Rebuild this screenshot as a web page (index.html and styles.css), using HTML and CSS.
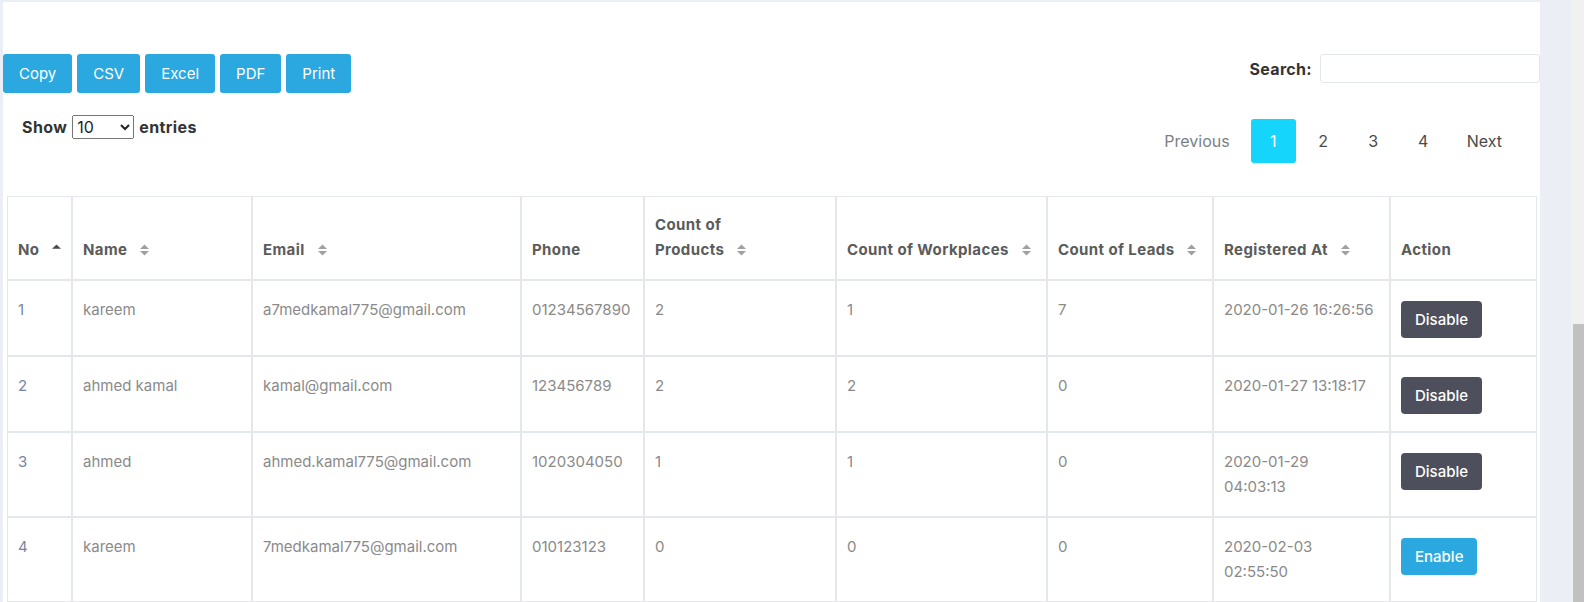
FILE: index.html
```html
<!DOCTYPE html>
<html lang="en">
<head>
<meta charset="utf-8">
<title>Users</title>
<link rel="stylesheet" href="styles.css">
</head>
<body>
<div class="app">
  <main class="content">
    <section class="card">
      <div class="toolbar">
        <div class="export-buttons">
          <button class="btn btn-export">Copy</button>
          <button class="btn btn-export">CSV</button>
          <button class="btn btn-export">Excel</button>
          <button class="btn btn-export">PDF</button>
          <button class="btn btn-export">Print</button>
        </div>
        <label class="search">Search: <input type="search" class="search-input"></label>
      </div>
      <div class="controls">
        <label class="length">Show
          <select class="length-select">
            <option>10</option><option>25</option><option>50</option><option>100</option>
          </select>
          entries</label>
        <nav class="pagination">
          <a class="page-link disabled">Previous</a>
          <a class="page-link active">1</a>
          <a class="page-link">2</a>
          <a class="page-link">3</a>
          <a class="page-link">4</a>
          <a class="page-link">Next</a>
        </nav>
      </div>
      <table class="data-table">
        <colgroup>
          <col class="c-no"><col class="c-name"><col class="c-email"><col class="c-phone"><col class="c-products"><col class="c-workplaces"><col class="c-leads"><col class="c-registered"><col class="c-action">
        </colgroup>
        <thead>
          <tr>
            <th>No<svg class="sort-icon" viewBox="0 0 10 12"><polygon class="asc-active" points="0,4.5 5,0 10,4.5"/></svg></th>
            <th>Name<svg class="sort-icon" viewBox="0 0 10 12"><polygon points="0,5 5,0 10,5"/><polygon points="0,7 5,12 10,7"/></svg></th>
            <th>Email<svg class="sort-icon" viewBox="0 0 10 12"><polygon points="0,5 5,0 10,5"/><polygon points="0,7 5,12 10,7"/></svg></th>
            <th>Phone</th>
            <th>Count of<br>Products<svg class="sort-icon" viewBox="0 0 10 12"><polygon points="0,5 5,0 10,5"/><polygon points="0,7 5,12 10,7"/></svg></th>
            <th>Count of Workplaces<svg class="sort-icon" viewBox="0 0 10 12"><polygon points="0,5 5,0 10,5"/><polygon points="0,7 5,12 10,7"/></svg></th>
            <th>Count of Leads<svg class="sort-icon" viewBox="0 0 10 12"><polygon points="0,5 5,0 10,5"/><polygon points="0,7 5,12 10,7"/></svg></th>
            <th>Registered At<svg class="sort-icon" viewBox="0 0 10 12"><polygon points="0,5 5,0 10,5"/><polygon points="0,7 5,12 10,7"/></svg></th>
            <th>Action</th>
          </tr>
        </thead>
        <tbody>
          <tr>
            <td class="num">1</td><td>kareem</td><td>a7medkamal775@gmail.com</td><td>01234567890</td><td>2</td><td>1</td><td>7</td>
            <td class="date">2020-01-26 16:26:56</td>
            <td><button class="btn btn-action btn-disable">Disable</button></td>
          </tr>
          <tr>
            <td class="num">2</td><td>ahmed kamal</td><td>kamal@gmail.com</td><td>123456789</td><td>2</td><td>2</td><td>0</td>
            <td class="date">2020-01-27 13:18:17</td>
            <td><button class="btn btn-action btn-disable">Disable</button></td>
          </tr>
          <tr>
            <td class="num">3</td><td>ahmed</td><td>ahmed.kamal775@gmail.com</td><td>1020304050</td><td>1</td><td>1</td><td>0</td>
            <td class="date">2020-01-29<br>04:03:13</td>
            <td><button class="btn btn-action btn-disable">Disable</button></td>
          </tr>
          <tr>
            <td class="num">4</td><td>kareem</td><td>7medkamal775@gmail.com</td><td>010123123</td><td>0</td><td>0</td><td>0</td>
            <td class="date">2020-02-03<br>02:55:50</td>
            <td><button class="btn btn-action btn-enable">Enable</button></td>
          </tr>
        </tbody>
      </table>
    </section>
  </main>
  <div class="scrollbar"><div class="scrollbar-thumb"></div></div>
</div>
</body>
</html>
```
FILE: styles.css
```css
html, body {
  margin: 0;
  height: 100%;
  overflow: hidden;
}
body {
  background: #ebeef4;
  font-family: Inter, "Open Sans", "DejaVu Sans", sans-serif;
  font-size: 15px;
  color: #333;
}
.app {
  display: flex;
  height: 602px;
}
.content {
  flex: 1;
  min-width: 0;
  padding: 2px 31px 0 3px;
}
.card {
  background: #fff;
  height: 100%;
  box-sizing: border-box;
  padding-top: 52px;
}
.toolbar {
  display: flex;
  justify-content: space-between;
  align-items: flex-start;
}
.export-buttons {
  display: flex;
  gap: 5px;
}
.btn {
  font-family: inherit;
  font-size: 15px;
  color: #fff;
  border: 0;
  cursor: pointer;
}
.btn-export {
  height: 39px;
  padding: 0 16px;
  background: #2ca8e0;
  border-radius: 3px;
}
.search {
  display: flex;
  align-items: center;
  gap: 8px;
  height: 29px;
  font-size: 16px;
  font-weight: 700;
  letter-spacing: 0.3px;
  color: #333;
}
.search-input {
  width: 220px;
  height: 29px;
  box-sizing: border-box;
  border: 1px solid #e3e6eb;
  border-radius: 3px;
  outline: none;
}
.controls {
  display: flex;
  justify-content: space-between;
  align-items: flex-start;
}
.length {
  margin: 22px 0 0 19px;
  display: flex;
  align-items: center;
  gap: 5px;
  font-size: 16px;
  font-weight: 700;
  letter-spacing: 0.4px;
  color: #333;
}
.length-select {
  width: 62px;
  height: 24px;
  font-family: inherit;
  font-size: 16px;
  letter-spacing: 0;
  color: #222;
}
.pagination {
  display: flex;
  gap: 5px;
  margin: 26px 22px 0 0;
  font-size: 16px;
}
.page-link {
  height: 44px;
  min-width: 45px;
  box-sizing: border-box;
  padding: 0 16px;
  display: flex;
  align-items: center;
  justify-content: center;
  color: #4a4a4a;
  border-radius: 3px;
}
.page-link.disabled {
  color: #7a7f86;
}
.page-link.active {
  background: #15d5fc;
  color: #fff;
}
.data-table {
  margin: 33px 3px 0 4px;
  width: 1530px;
  table-layout: fixed;
  border-collapse: separate;
  border-spacing: 0;
}
.c-no { width: 65px; }
.c-name { width: 180px; }
.c-email { width: 269px; }
.c-phone { width: 123px; }
.c-products { width: 192px; }
.c-workplaces { width: 211px; }
.c-leads { width: 166px; }
.c-registered { width: 177px; }
.c-action { width: 147px; }
.data-table th,
.data-table td {
  border: 1px solid #e4e7ec;
  line-height: 25px;
  text-align: left;
}
.data-table th {
  padding: 15px 10px 17px;
  vertical-align: bottom;
  white-space: nowrap;
  font-weight: 700;
  letter-spacing: 0.4px;
  color: #5b5b5b;
}
.data-table td {
  padding: 16px 10px 17px;
  vertical-align: top;
  color: #8a8a8a;
}
.data-table td.num {
  color: #7686a3;
}
.data-table td.date {
  white-space: nowrap;
}
.sort-icon {
  display: inline-block;
  width: 9px;
  height: 12px;
  margin-left: 13px;
  vertical-align: -1px;
  fill: #a0a0a0;
}
.sort-icon .asc-active {
  fill: #4a4a4a;
}
.btn-action {
  display: inline-block;
  height: 37px;
  margin-top: 4px;
  padding: 0 14px;
  border-radius: 4px;
  font-weight: 500;
  vertical-align: top;
}
.btn-disable {
  background: #4d505c;
}
.btn-enable {
  background: #2ca8e0;
}
.scrollbar {
  width: 13px;
  background: #f1f1f1;
  display: flex;
  flex-direction: column;
  padding-top: 324px;
  box-sizing: border-box;
}
.scrollbar-thumb {
  flex: 1;
  margin-left: 2px;
  background: #c1c1c1;
}
```
